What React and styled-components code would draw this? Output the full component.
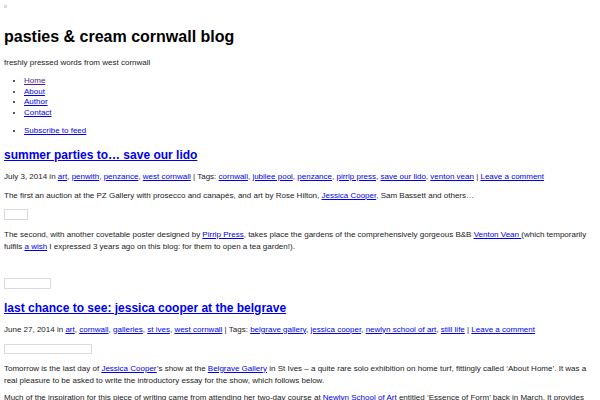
import React from "react";
import styled, { createGlobalStyle } from "styled-components";

const Global = createGlobalStyle`
  html, body { background: #fff; }
  body {
    margin: 4px;
    font-family: "Liberation Sans", Arial, Helvetica, sans-serif;
    font-size: 8px;
    color: #222;
  }
`;

const Page = styled.div`
  display: flex;
  flex-direction: column;
`;

const BrokenRow = styled.div`
  height: 10px;
  display: flex;
  align-items: flex-start;
  padding-top: 1px;
`;

const BrokenIcon = styled.span`
  display: block;
  width: 3px;
  height: 3px;
  background: #d8d8d8;
`;

const SiteTitle = styled.h1`
  font-size: 16px;
  line-height: 18px;
  font-weight: 700;
  color: #000;
  margin: 13px 0 11px;
`;

const Tagline = styled.p`
  margin: 0;
  line-height: 12px;
`;

const NavList = styled.ul`
  margin: ${(p) => p.$mt || 7}px 0 0;
  padding-left: 20px;
  list-style: disc;
  line-height: 10.5px;
`;

const Link = styled.a`
  color: ${(p) => (p.$visited ? "#551a8b" : "#0000ee")};
  text-decoration: underline;
`;

const Article = styled.article`
  display: flex;
  flex-direction: column;
`;

const PostTitle = styled.h2`
  font-size: 12px;
  line-height: 14px;
  font-weight: 700;
  margin: ${(p) => p.$mt}px 0 9px;
  a { color: #0000ee; }
`;

const Meta = styled.p`
  margin: 0;
  line-height: 12px;
`;

const Para = styled.p`
  margin: ${(p) => p.$mt ?? 8}px 0 0;
  line-height: 12px;
`;

const Frame = styled.div`
  width: ${(p) => p.$w}px;
  height: ${(p) => p.$h || 10}px;
  border: 1px solid #d9d9d9;
  box-sizing: border-box;
  margin-top: ${(p) => p.$mt}px;
`;

const Sep = () => <span> | </span>;

function LinkList({ items }) {
  return items.map((t, i) => (
    <React.Fragment key={t}>
      <Link href="#">{t}</Link>
      {i < items.length - 1 ? ", " : ""}
    </React.Fragment>
  ));
}

export default function App() {
  return (
    <Page>
      <Global />
      <BrokenRow>
        <BrokenIcon />
      </BrokenRow>
      <SiteTitle>pasties &amp; cream cornwall blog</SiteTitle>
      <Tagline>freshly pressed words from west cornwall</Tagline>
      <NavList>
        <li><Link href="#" $visited>Home</Link></li>
        <li><Link href="#">About</Link></li>
        <li><Link href="#">Author</Link></li>
        <li><Link href="#">Contact</Link></li>
      </NavList>
      <NavList $mt={8}>
        <li><Link href="#">Subscribe to feed</Link></li>
      </NavList>

      <Article>
        <PostTitle $mt={11}>
          <a href="#">summer parties to… save our lido</a>
        </PostTitle>
        <Meta>
          July 3, 2014 in{" "}
          <LinkList items={["art", "penwith", "penzance", "west cornwall"]} />
          <Sep />Tags:{" "}
          <LinkList
            items={[
              "cornwall",
              "jubilee pool",
              "penzance",
              "pirrip press",
              "save our lido",
              "venton vean",
            ]}
          />
          <Sep />
          <Link href="#">Leave a comment</Link>
        </Meta>
        <Para $mt={7}>
          The first an auction at the PZ Gallery with prosecco and canapés, and
          art by Rose Hilton, <Link href="#">Jessica Cooper</Link>, Sam Bassett
          and others…
        </Para>
        <Frame $w={24} $h={11} $mt={7} />
        <Para $mt={9}>
          The second, with another covetable poster designed by{" "}
          <Link href="#">Pirrip Press</Link>, takes place the gardens of the
          comprehensively gorgeous B&amp;B <Link href="#">Venton Vean </Link>
          (which temporarily fulfils <Link href="#">a wish</Link> I expressed 3
          years ago on this blog: for them to open a tea garden!).
        </Para>
        <Frame $w={47} $h={11} $mt={25} />
      </Article>

      <Article>
        <PostTitle $mt={12}>
          <a href="#">last chance to see: jessica cooper at the belgrave</a>
        </PostTitle>
        <Meta>
          June 27, 2014 in{" "}
          <LinkList
            items={["art", "cornwall", "galleries", "st ives", "west cornwall"]}
          />
          <Sep />Tags:{" "}
          <LinkList
            items={[
              "belgrave gallery",
              "jessica cooper",
              "newlyn school of art",
              "still life",
            ]}
          />
          <Sep />
          <Link href="#">Leave a comment</Link>
        </Meta>
        <Frame $w={88} $h={10} $mt={8} />
        <Para $mt={9}>
          Tomorrow is the last day of <Link href="#">Jessica Cooper</Link>’s
          show at the <Link href="#">Belgrave Gallery</Link> in St Ives – a
          quite rare solo exhibition on home turf, fittingly called ‘About
          Home’. It was a real pleasure to be asked to write the introductory
          essay for the show, which follows below.
        </Para>
        <Para $mt={5}>
          Much of the inspiration for this piece of writing came from attending
          her two-day course at <Link href="#">Newlyn School of Art</Link>{" "}
          entitled ‘Essence of Form’ back in March. It provides not only a
          wonderful insight into her way of working, but also a chance to look
          closely at everyday objects.
        </Para>
      </Article>
    </Page>
  );
}
